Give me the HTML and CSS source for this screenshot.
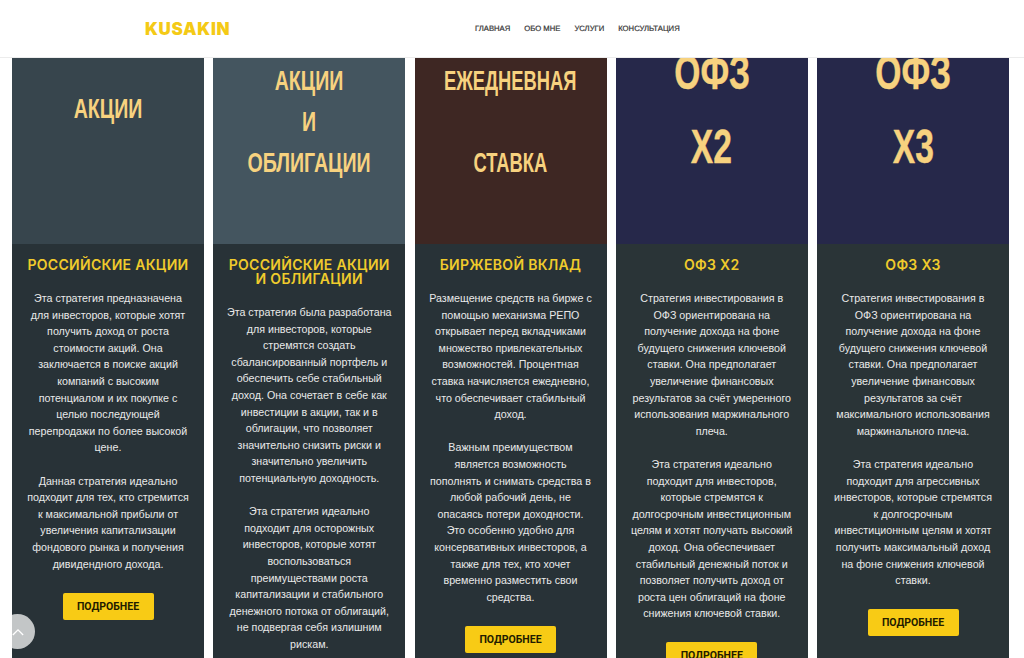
FILE: index.html
```html
<!DOCTYPE html>
<html lang="ru">
<head>
<meta charset="utf-8">
<title>KUSAKIN</title>
<link rel="stylesheet" href="styles.css">
</head>
<body>
<header class="header">
  <div class="logo">KUSAKIN</div>
  <nav class="nav">
    <a>ГЛАВНАЯ</a><a>ОБО МНЕ</a><a>УСЛУГИ</a><a>КОНСУЛЬТАЦИЯ</a>
  </nav>
</header>
<main class="cards">
  <article class="card">
    <div class="cover cover-slate small single"><p>АКЦИИ</p></div>
    <div class="body">
      <h2>РОССИЙСКИЕ АКЦИИ</h2>
      <p>Эта стратегия предназначена для инвесторов, которые хотят получить доход от роста стоимости акций. Она заключается в поиске акций компаний с высоким потенциалом и их покупке с целью последующей перепродажи по более высокой цене.</p>
      <p>Данная стратегия идеально подходит для тех, кто стремится к максимальной прибыли от увеличения капитализации фондового рынка и получения дивидендного дохода.</p>
      <a class="btn">ПОДРОБНЕЕ</a>
    </div>
  </article>
  <article class="card">
    <div class="cover cover-steel small"><p>АКЦИИ</p><p>И</p><p>ОБЛИГАЦИИ</p></div>
    <div class="body">
      <h2>РОССИЙСКИЕ АКЦИИ И ОБЛИГАЦИИ</h2>
      <p>Эта стратегия была разработана для инвесторов, которые стремятся создать сбалансированный портфель и обеспечить себе стабильный доход. Она сочетает в себе как инвестиции в акции, так и в облигации, что позволяет значительно снизить риски и значительно увеличить потенциальную доходность.</p>
      <p>Эта стратегия идеально подходит для осторожных инвесторов, которые хотят воспользоваться преимуществами роста капитализации и стабильного денежного потока от облигаций, не подвергая себя излишним рискам.</p>
    </div>
  </article>
  <article class="card">
    <div class="cover cover-brown small narrow"><p>ЕЖЕДНЕВНАЯ</p><p>&nbsp;</p><p>СТАВКА</p></div>
    <div class="body">
      <h2>БИРЖЕВОЙ ВКЛАД</h2>
      <p>Размещение средств на бирже с помощью механизма РЕПО открывает перед вкладчиками множество привлекательных возможностей. Процентная ставка начисляется ежедневно, что обеспечивает стабильный доход.</p>
      <p>Важным преимуществом является возможность пополнять и снимать средства в любой рабочий день, не опасаясь потери доходности. Это особенно удобно для консервативных инвесторов, а также для тех, кто хочет временно разместить свои средства.</p>
      <a class="btn">ПОДРОБНЕЕ</a>
    </div>
  </article>
  <article class="card card-alt">
    <div class="cover cover-navy big"><p>ОФЗ</p><p>Х2</p></div>
    <div class="body">
      <h2>ОФЗ Х2</h2>
      <p>Стратегия инвестирования в ОФЗ ориентирована на получение дохода на фоне будущего снижения ключевой ставки. Она предполагает увеличение финансовых результатов за счёт умеренного использования маржинального плеча.</p>
      <p>Эта стратегия идеально подходит для инвесторов, которые стремятся к долгосрочным инвестиционным целям и хотят получать высокий доход. Она обеспечивает стабильный денежный поток и позволяет получить доход от роста цен облигаций на фоне снижения ключевой ставки.</p>
      <a class="btn">ПОДРОБНЕЕ</a>
    </div>
  </article>
  <article class="card card-alt card-tight">
    <div class="cover cover-navy big"><p>ОФЗ</p><p>Х3</p></div>
    <div class="body">
      <h2>ОФЗ Х3</h2>
      <p>Стратегия инвестирования в ОФЗ ориентирована на получение дохода на фоне будущего снижения ключевой ставки. Она предполагает увеличение финансовых результатов за счёт максимального использования маржинального плеча.</p>
      <p>Эта стратегия идеально подходит для агрессивных инвесторов, которые стремятся к долгосрочным инвестиционным целям и хотят получить максимальный доход на фоне снижения ключевой ставки.</p>
      <a class="btn">ПОДРОБНЕЕ</a>
    </div>
  </article>
</main>
<a class="to-top" aria-label="Наверх">
  <svg width="12" height="8" viewBox="0 0 14 9"><path d="M1 8l6-6 6 6" fill="none" stroke="#fff" stroke-width="1.6"/></svg>
</a>
</body>
</html>
```
FILE: styles.css
```css
* { box-sizing: border-box; }
html, body { height: 100%; }
body {
  margin: 0;
  height: 658px;
  overflow: hidden;
  background: #fff;
  font-family: "Liberation Sans", Arial, sans-serif;
}
.header {
  height: 58px;
  display: flex;
  align-items: center;
  padding: 0 0 0 145px;
  background: #fff;
  border-bottom: 1px solid #ececec;
}
.logo {
  width: 330px;
  font-family: Inter, sans-serif;
  font-weight: 900;
  font-size: 17px;
  letter-spacing: .7px;
  color: #f4ca16;
}
.nav { display: flex; gap: 14px; }
.nav a {
  font-size: 7.7px;
  color: #333;
  -webkit-text-stroke: .2px #333;
  text-rendering: geometricPrecision;
}
.cards {
  display: grid;
  grid-template-columns: repeat(5, 192px);
  column-gap: 9.25px;
  padding-left: 12px;
  height: 600px;
  overflow: hidden;
}
.card { display: flex; flex-direction: column; height: 640px; background: #283237; }
.card-alt { background: #2a3437; }
.cover {
  flex: none;
  height: 186px;
  overflow: hidden;
  display: flex;
  flex-direction: column;
  justify-content: center;
  align-items: center;
  text-align: center;
  font-weight: 700;
  color: #f7d27f;
}
.cover p { margin: 0; white-space: nowrap; transform: scaleX(.7); }
.small { font-size: 28px; line-height: 41px; padding-bottom: 59px; }
.single { padding-bottom: 85px; }
.narrow p { transform: scaleX(.655); }
.big { font-size: 48px; line-height: 74px; padding-bottom: 83px; -webkit-text-stroke: .4px #f7d27f; }
.cover-slate { background: #37454d; }
.cover-steel { background: #44555f; }
.cover-brown { background: #3e2723; }
.cover-navy { background: #26284a; }
.body {
  flex: 1;
  display: flex;
  flex-direction: column;
  align-items: center;
  padding: 14px 13px 0;
  text-align: center;
}
.card-tight .body { padding: 14px 15.5px 0; }
.body h2 {
  margin: 0 0 18px;
  font-family: Inter, sans-serif;
  font-size: 14px;
  line-height: 14px;
  font-weight: 600;
  letter-spacing: .3px;
  color: #f0cb2c;
}
.body p {
  margin: 0 0 16.6px;
  font-size: 10.7px;
  line-height: 16.6px;
  color: #e9e9e9;
}
.btn {
  display: flex;
  align-items: center;
  justify-content: center;
  flex: none;
  width: 91px;
  height: 27px;
  margin-top: 4px;
  border-radius: 2px;
  background: #f8cb15;
  font-family: Roboto, sans-serif;
  font-size: 10.5px;
  font-weight: 700;
  color: #231c00;
}
.to-top {
  position: fixed;
  left: 0;
  top: 614px;
  width: 35px;
  height: 35px;
  border-radius: 50%;
  background: rgba(255,255,255,.72);
  display: flex;
  align-items: center;
  justify-content: center;
}
```
